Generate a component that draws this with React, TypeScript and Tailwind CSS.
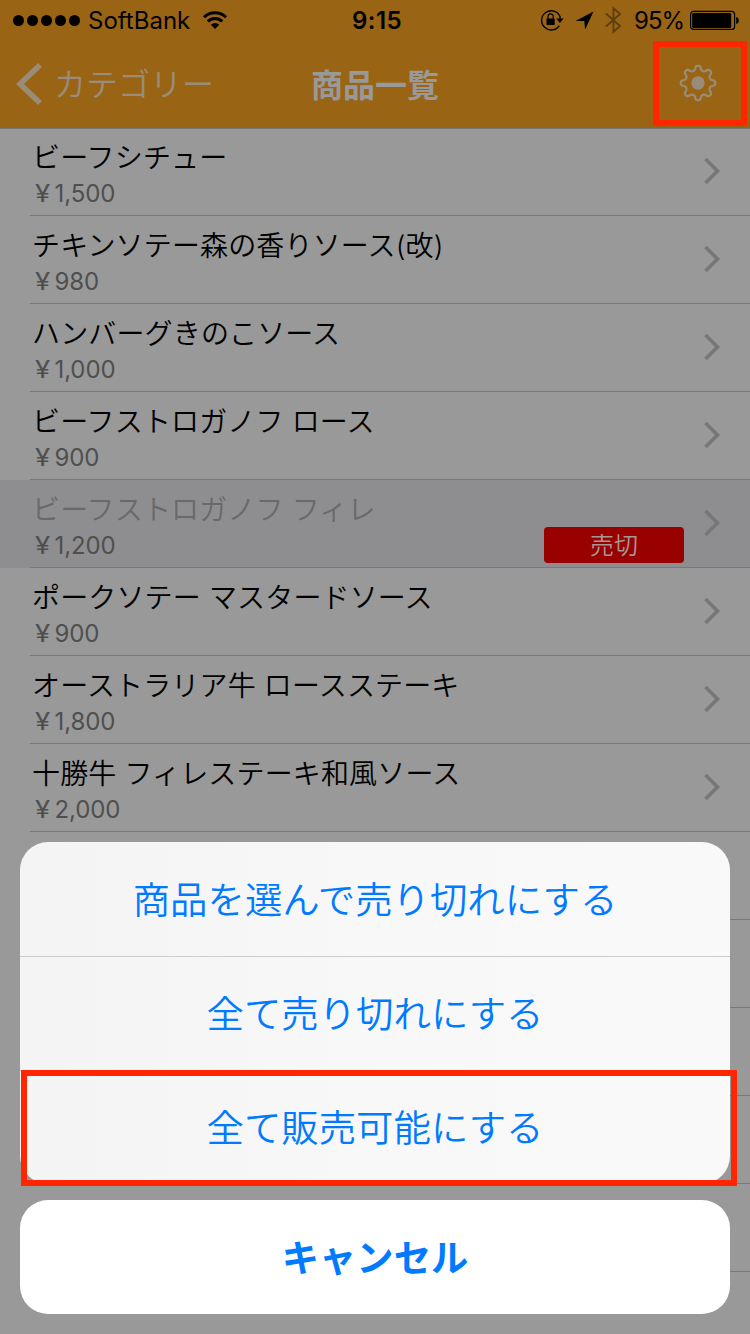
import { ReactNode } from 'react';

interface Product {
  name: string;
  price: string;
  soldOut?: boolean;
}

const products: Product[] = [
  { name: 'ビーフシチュー', price: '1,500' },
  { name: 'チキンソテー森の香りソース(改)', price: '980' },
  { name: 'ハンバーグきのこソース', price: '1,000' },
  { name: 'ビーフストロガノフ ロース', price: '900' },
  { name: 'ビーフストロガノフ フィレ', price: '1,200', soldOut: true },
  { name: 'ポークソテー マスタードソース', price: '900' },
  { name: 'オーストラリア牛 ロースステーキ', price: '1,800' },
  { name: '十勝牛 フィレステーキ和風ソース', price: '2,000' },
];

const emptyRows = [0, 1, 2, 3, 4, 5];

// eight rounded teeth around the centre
const gearPoints = Array.from({ length: 240 }, (_, i) => {
  const t = (i / 240) * Math.PI * 2;
  const r = 15.1 + 2.3 * Math.tanh(1.8 * (Math.cos(8 * t) - 0.1));
  return `${(19 + r * Math.cos(t)).toFixed(2)},${(19 + r * Math.sin(t)).toFixed(2)}`;
}).join(' ');

function StatusBar() {
  return (
    <div className="h-10 grid grid-cols-[1fr_auto_1fr] items-center text-[24px] leading-none text-black">
      <div className="flex items-center pl-[13px]">
        <div className="flex gap-[3px]">
          {[0, 1, 2, 3, 4].map((i) => (
            <span key={i} className="w-[11px] h-[11px] rounded-full bg-black" />
          ))}
        </div>
        <span className="pt-[2px] ml-2 w-[103px] whitespace-nowrap">SoftBank</span>
        <svg className="ml-[11px]" width="26" height="20" viewBox="0 0 26 20" fill="none" stroke="black" strokeWidth="3">
          <path d="M2 7.2a15.6 15.6 0 0 1 22 0" />
          <path d="M5.8 11.4a10.2 10.2 0 0 1 14.4 0" />
          <path d="M13 19l-4.2-4.3a6 6 0 0 1 8.4 0z" fill="black" stroke="none" />
        </svg>
      </div>
      <span className="font-semibold tracking-[0.5px] pl-[4px] pt-[2px]">9:15</span>
      <div className="flex items-center justify-end pr-[10px]">
        <svg width="24" height="22" viewBox="0 0 24 22" fill="none" stroke="black">
          <path d="M19.3 16.6A9.6 9.6 0 1 1 20 7.5" strokeWidth="1.3" />
          <path d="M20 7v4" strokeWidth="1.3" />
          <path d="M16.2 9.6h7.4L19.9 14z" fill="black" stroke="none" />
          <rect x="6.5" y="9.5" width="8.2" height="6.5" rx="0.6" fill="black" stroke="none" />
          <path d="M8 10V7.4a2.6 2.6 0 0 1 5.2 0V10" strokeWidth="1.2" />
        </svg>
        <svg className="ml-[11px]" width="19" height="19" viewBox="0 0 19 19">
          <path d="M18.5 0.5L0.5 10h8.8l0.8 8.5z" fill="black" />
        </svg>
        <svg className="ml-[11px]" width="17" height="28" viewBox="0 0 17 28" fill="none" stroke="#5c3d0d" strokeWidth="1.8">
          <path d="M1 7.5l14 12.6-6.5 5.6V2.3L15 7.9 1 20.5" />
        </svg>
        <span className="ml-[12px] w-[51px] pt-[2px] tracking-[-1px]">95%</span>
        <svg className="ml-[5px]" width="50" height="20" viewBox="0 0 50 20">
          <rect x="0.6" y="1.4" width="44" height="18" rx="3" fill="none" stroke="black" strokeWidth="1.2" />
          <rect x="2.2" y="2.9" width="39" height="15" rx="1.2" fill="black" />
          <path d="M46.2 7c3.5 0.8 3.5 6.2 0 7z" fill="black" />
        </svg>
      </div>
    </div>
  );
}

function NavBar() {
  return (
    <div className="h-[88px] grid grid-cols-[1fr_auto_1fr] items-center text-[#998c79]">
      <div className="flex items-center pl-[16px]">
        <svg width="27" height="44" viewBox="0 0 27 44" fill="none" stroke="currentColor" strokeWidth="5.5">
          <path d="M24 3L4 22l20 19" />
        </svg>
        <span className="ml-[11px] pt-[2px] text-[32px] font-[350] leading-none whitespace-nowrap">カテゴリー</span>
      </div>
      <h1 className="pt-[3px] text-[32px] font-bold leading-none text-[#999999]">商品一覧</h1>
      <button className="self-start mt-px justify-self-end mr-[3px] w-[94px] h-[85px] border-[6px] border-[#ff2600] flex items-center justify-center pr-[4px] pb-[2px]">
        <svg width="38" height="38" viewBox="0 0 38 38">
          <polygon points={gearPoints} fill="none" stroke="currentColor" strokeWidth="2.2" />
          <circle cx="19" cy="19" r="6.7" fill="currentColor" />
        </svg>
      </button>
    </div>
  );
}

function ProductRow({ product }: { product: Product }) {
  return (
    <li className={`h-[88px] pl-[30px] ${product.soldOut ? 'bg-[#8e8e90]' : ''}`}>
      <div className="h-full border-b border-[#79797b] flex items-center pl-[2px] pr-[30px]">
        <div className="flex-1 whitespace-nowrap pt-[9px]">
          <p className={`text-[28px] font-[350] leading-[36px] tracking-[0.15px] ${product.soldOut ? 'text-[#69696b]' : 'text-black'}`}>{product.name}</p>
          <p className="text-[24px] leading-[36px] text-[#4f4f4f] pl-[3px] tracking-[-0.1px]">
            <span className="inline-block w-[19.5px] origin-left scale-x-115">¥</span>
            {product.price}
          </p>
        </div>
        {product.soldOut && (
          <span className="self-end mb-1 mr-[20px] w-[140px] h-9 rounded-[4px] bg-[#990000] text-[#a89797] text-[24px] font-[350] leading-[37px] text-center">
            売切
          </span>
        )}
        <svg className="mb-[2px]" width="16" height="28" viewBox="0 0 16 28" fill="none" stroke="#77777a" strokeWidth="3.6">
          <path d="M1.5 2l12 12-12 12" />
        </svg>
      </div>
    </li>
  );
}

function SheetButton({ children }: { children: ReactNode }) {
  return (
    <button className="block w-full h-[114px] pt-[4px] text-[37.4px] font-[350] leading-none text-[#007aff] whitespace-nowrap">
      {children}
    </button>
  );
}

export default function App() {
  return (
    <div className="relative w-[750px] h-[1334px] overflow-hidden bg-[#999999] font-['Inter','Noto_Sans_CJK_JP',sans-serif]">
      <header className="h-[129px] bg-[#996515] border-b border-[#777777]">
        <StatusBar />
        <NavBar />
      </header>

      <ul className="-mt-px">
        {products.map((product) => (
          <ProductRow key={product.name} product={product} />
        ))}
        {emptyRows.map((i) => (
          <li key={i} className="h-[88px] pl-[30px]">
            <div className="h-full border-b border-[#79797b]" />
          </li>
        ))}
      </ul>

      {/* action sheet */}
      <div className="absolute inset-x-5 bottom-5 flex flex-col gap-4">
        <div className="relative">
          <div className="rounded-[28px] overflow-hidden bg-gradient-to-r from-[#f4f4f4] via-[#f8f8f8] to-[#f9f9f9]">
            <SheetButton>商品を選んで売り切れにする</SheetButton>
            <div className="h-px -mb-px bg-[#cbcbd0]" />
            <SheetButton>全て売り切れにする</SheetButton>
            <div className="h-px -mb-px bg-[#cbcbd0]" />
            <SheetButton>全て販売可能にする</SheetButton>
          </div>
          <div className="absolute left-[1px] -right-[7px] -bottom-[2px] h-[116px] border-[6px] border-[#ff2600]" />
        </div>
        <button className="h-[114px] pt-[3px] rounded-[28px] bg-white text-[37.3px] font-bold leading-none text-[#007aff]">キャンセル</button>
      </div>
    </div>
  );
}
